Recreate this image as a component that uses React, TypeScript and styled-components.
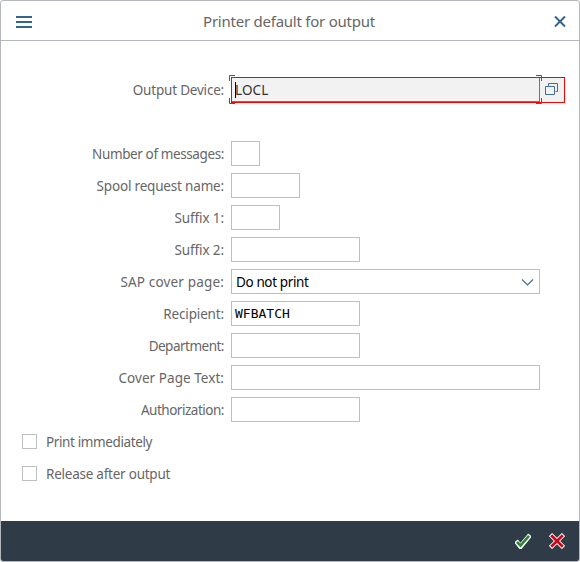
import React from "react";
import styled, { createGlobalStyle } from "styled-components";

const GlobalStyle = createGlobalStyle`
  * { box-sizing: border-box; }
  body { margin: 0; background: #fff; }
`;

const Dialog = styled.div`
  width: 580px;
  height: 562px;
  display: flex;
  flex-direction: column;
  border: 1px solid #b5b7be;
  border-radius: 3px;
  overflow: hidden;
  background: #fff;
  color: #666;
  font: 13.5px/24px "Noto Sans", "Open Sans", sans-serif;
  white-space: nowrap;
`;

const Header = styled.header`
  height: 40px;
  flex: none;
  display: flex;
  align-items: center;
  justify-content: space-between;
  padding: 0 13px 0 15px;
  border-bottom: 1px solid #b5b7be;
`;

const Title = styled.h1<{ $tracking: number }>`
  margin: 1px 8px 0 0;
  font-size: 15px;
  font-weight: 400;
  letter-spacing: ${(p) => p.$tracking}px;
`;

const Icon = styled.svg`
  display: block;
  flex: none;
`;

const Form = styled.main`
  flex: 1;
  display: flex;
  flex-direction: column;
  gap: 7px;
  padding-top: 36px;
`;

const Row = styled.div<{ $gapAfter?: number }>`
  display: flex;
  height: 25px;
  margin-bottom: ${(p) => p.$gapAfter ?? 0}px;
`;

const Label = styled.label<{ $tracking: number }>`
  width: 223px;
  margin-right: 7px;
  display: flex;
  justify-content: flex-end;
  line-height: 26px;
  letter-spacing: ${(p) => p.$tracking}px;
`;

const Field = styled.div<{ $width: number }>`
  width: ${(p) => p.$width}px;
  height: 25px;
  display: flex;
  align-items: center;
  justify-content: space-between;
  padding: 0 4px;
  border: 1px solid #bfbfbf;
  color: #000;
`;

const Mono = styled.span`
  font-family: "DejaVu Sans Mono", monospace;
  font-size: 13px;
  line-height: 23px;
  margin-left: -1px;
`;

const Value = styled.span<{ $tracking: number }>`
  letter-spacing: ${(p) => p.$tracking}px;
`;

const DeviceField = styled.div`
  position: relative;
  width: 334px;
  height: 26px;
  display: flex;
  border: 1px solid #ff0000;
  background: #f2f2f2;
  color: #333;
`;

const DeviceInput = styled.div`
  width: 308px;
  display: flex;
  align-items: center;
  padding-left: 3px;
  border-right: 1px solid #527fa8;
  border-bottom: 1px solid #527fa8;
`;

const Caret = styled.span`
  width: 1px;
  height: 16px;
  margin-right: -1px;
  background: #000;
`;

const HelpButton = styled.div`
  flex: 1;
  padding: 5px 0 0 5px;
`;

const FocusCorners = styled.svg`
  position: absolute;
  left: -3px;
  top: -3px;
`;

const CheckRow = styled.div`
  display: flex;
  height: 25px;
  padding-left: 21px;
  align-items: center;
`;

const CheckBox = styled.span`
  width: 15px;
  height: 15px;
  margin-right: 9px;
  border: 1px solid #bfbfbf;
`;

const Footer = styled.footer`
  height: 40px;
  flex: none;
  display: flex;
  align-items: center;
  justify-content: flex-end;
  gap: 18px;
  padding: 0 14px 1px 0;
  background: #2f3c48;
`;

const fields = [
  { label: "Number of messages:", tracking: -0.39, width: 29 },
  { label: "Spool request name:", tracking: -0.18, width: 69 },
  { label: "Suffix 1:", tracking: -0.1, width: 49 },
  { label: "Suffix 2:", tracking: -0.1, width: 129 },
  { label: "SAP cover page:", tracking: 0.17, width: 309, select: "Do not print" },
  { label: "Recipient:", tracking: -0.15, width: 129, value: "WFBATCH" },
  { label: "Department:", tracking: -0.5, width: 129 },
  { label: "Cover Page Text:", tracking: 0.05, width: 309 },
  { label: "Authorization:", tracking: -0.48, width: 129 },
];

const checks = [
  { label: "Print immediately", tracking: -0.38 },
  { label: "Release after output", tracking: -0.24 },
];

export default function App() {
  return (
    <>
      <GlobalStyle />
      <Dialog>
        <Header>
          <Icon width="16" height="14" viewBox="0 0 16 14" fill="#33658f" shapeRendering="crispEdges">
            <path d="M0 2h16v2H0zM0 7h16v2H0zM0 12h16v2H0z" />
          </Icon>
          <Title $tracking={-0.24}>Printer default for output</Title>
          <Icon width="12" height="12" viewBox="0 0 12 12" stroke="#33658f" strokeWidth="2">
            <path d="M1 1.500l10 10M11 1.500L1 11.500" />
          </Icon>
        </Header>
        <Form>
          <Row $gapAfter={32}>
            <Label $tracking={-0.2}>Output Device:</Label>
            <DeviceField>
              <DeviceInput>
                <Caret />
                <Value $tracking={0.1}>LOCL</Value>
              </DeviceInput>
              <HelpButton>
                <Icon width="14" height="14" viewBox="0 0 14 14" fill="none" stroke="#426f98">
                  <path d="M.5 3.500h9v8h-9zM3.500 3v-2.500h9v8h-2" />
                </Icon>
              </HelpButton>
              <FocusCorners width="314" height="30" viewBox="0 0 314 30" fill="none" stroke="#35608a">
                <path d="M.5 6V.5H6M307 .5h5.500V6M.5 23v5.500H6M307 28.500h5.500V23" />
              </FocusCorners>
            </DeviceField>
          </Row>
          {fields.map((f) => (
            <Row key={f.label}>
              <Label $tracking={f.tracking}>{f.label}</Label>
              <Field $width={f.width}>
                {f.value && <Mono>{f.value}</Mono>}
                {f.select && (
                  <>
                    <Value $tracking={-0.38}>{f.select}</Value>
                    <Icon width="14" height="8" viewBox="0 0 14 8" fill="none" stroke="#426f98" strokeWidth="1.2">
                      <path d="M1 1.500l5.500 5.500 5.500-5.500" />
                    </Icon>
                  </>
                )}
              </Field>
            </Row>
          ))}
          {checks.map((c) => (
            <CheckRow key={c.label}>
              <CheckBox />
              <Value $tracking={c.tracking}>{c.label}</Value>
            </CheckRow>
          ))}
        </Form>
        <Footer>
          <Icon width="16" height="16" viewBox="0 0 16 16" fill="none">
            <path d="M1 8l4.500 5.500L15 2" stroke="#fff" strokeWidth="4.800" />
            <path d="M2 8.800l3.500 3.700L14 2.800" stroke="#2c8532" strokeWidth="2.600" />
          </Icon>
          <Icon width="16" height="16" viewBox="0 0 16 16" fill="none">
            <path d="M1.500 1.500l13 13M14.500 1.500l-13 13" stroke="#fff" strokeWidth="4.500" />
            <path d="M2.200 2.200l11.600 11.600M13.800 2.200L2.200 13.800" stroke="#c5081c" strokeWidth="2.800" />
          </Icon>
        </Footer>
      </Dialog>
    </>
  );
}
